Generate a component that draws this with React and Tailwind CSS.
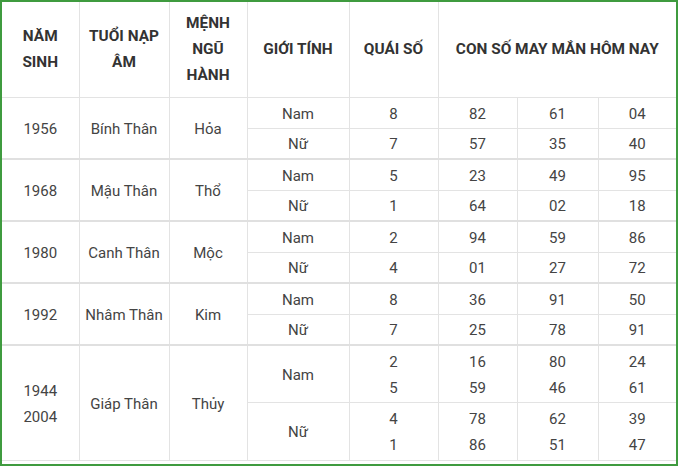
const groups = [
  { year: ['1956'], napAm: 'Bính Thân', menh: 'Hỏa', rows: [
    { sex: 'Nam', quai: ['8'], nums: [['82'], ['61'], ['04']] },
    { sex: 'Nữ', quai: ['7'], nums: [['57'], ['35'], ['40']] },
  ] },
  { year: ['1968'], napAm: 'Mậu Thân', menh: 'Thổ', rows: [
    { sex: 'Nam', quai: ['5'], nums: [['23'], ['49'], ['95']] },
    { sex: 'Nữ', quai: ['1'], nums: [['64'], ['02'], ['18']] },
  ] },
  { year: ['1980'], napAm: 'Canh Thân', menh: 'Mộc', rows: [
    { sex: 'Nam', quai: ['2'], nums: [['94'], ['59'], ['86']] },
    { sex: 'Nữ', quai: ['4'], nums: [['01'], ['27'], ['72']] },
  ] },
  { year: ['1992'], napAm: 'Nhâm Thân', menh: 'Kim', rows: [
    { sex: 'Nam', quai: ['8'], nums: [['36'], ['91'], ['50']] },
    { sex: 'Nữ', quai: ['7'], nums: [['25'], ['78'], ['91']] },
  ] },
  { year: ['1944', '2004'], napAm: 'Giáp Thân', menh: 'Thủy', tall: true, rows: [
    { sex: 'Nam', quai: ['2', '5'], nums: [['16', '59'], ['80', '46'], ['24', '61']] },
    { sex: 'Nữ', quai: ['4', '1'], nums: [['78', '86'], ['62', '51'], ['39', '47']] },
  ] },
];

function Lines({ items }) {
  return items.map((t, i) => <div key={i}>{t}</div>);
}

export default function App() {
  const cell = 'border border-[#e3e3e3] text-center align-middle p-0';
  const body = cell + ' pt-[2px]';
  return (
    <div className="w-[680px] h-[466px] bg-white font-['Roboto',sans-serif] text-[15px] text-[#444]">
      <div className="w-[678px] h-[466px] border-2 border-[#3f9b3f] overflow-hidden">
        <table className="w-[674px] table-fixed border-collapse leading-[26px]">
          <colgroup>
            <col className="w-[77px]" />
            <col className="w-[90px]" />
            <col className="w-[78px]" />
            <col className="w-[102px]" />
            <col className="w-[89px]" />
            <col className="w-[79px]" />
            <col className="w-[81px]" />
            <col className="w-[78px]" />
          </colgroup>
          <thead>
            <tr className="h-[95px] font-bold uppercase text-[#333] text-[15.4px]">
              <th className={cell + ' border-t-0 border-l-0 font-bold'}>Năm<br />sinh</th>
              <th className={cell + ' border-t-0 font-bold'}>Tuổi nạp<br />âm</th>
              <th className={cell + ' border-t-0 font-bold'}>Mệnh<br />ngũ<br />hành</th>
              <th className={cell + ' border-t-0 font-bold'}>Giới tính</th>
              <th className={cell + ' border-t-0 font-bold'}>Quái số</th>
              <th colSpan={3} className={cell + ' border-t-0 border-r-0 font-bold'}>Con số may mắn hôm nay</th>
            </tr>
          </thead>
          <tbody>
            {groups.map((g, gi) =>
              g.rows.map((r, ri) => (
                <tr
                  key={gi + '-' + ri}
                  className={(g.tall ? (ri === 0 ? 'h-[57px]' : 'h-[58px]') : 'h-[31px]') + (ri === 0 && gi > 0 ? ' border-t-2 border-[#e0e0e0]' : '')}
                >
                  {ri === 0 && (
                    <>
                      <td rowSpan={2} className={body + ' border-l-0'}><Lines items={g.year} /></td>
                      <td rowSpan={2} className={body}>{g.napAm}</td>
                      <td rowSpan={2} className={body}>{g.menh}</td>
                    </>
                  )}
                  <td className={body}>{r.sex}</td>
                  <td className={body}><Lines items={r.quai} /></td>
                  {r.nums.map((n, ni) => (
                    <td key={ni} className={body + (ni === 2 ? ' border-r-0' : '')}><Lines items={n} /></td>
                  ))}
                </tr>
              ))
            )}
          </tbody>
        </table>
      </div>
    </div>
  );
}
